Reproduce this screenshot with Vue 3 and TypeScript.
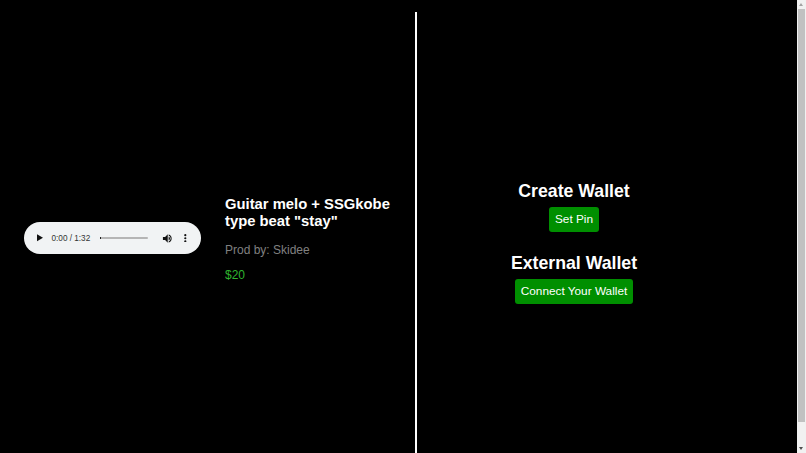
<script setup lang="ts">
const title = 'Guitar melo + SSGkobe type beat "stay"'
</script>

<template>
  <main class="page">
    <section class="left">
      <div class="player" role="group" aria-label="Audio player">
        <svg class="play" viewBox="0 0 10 12" width="6" height="7.500"><path d="M0 0 L10 6 L0 12 Z" fill="#111" /></svg>
        <span class="time">0:00 / 1:32</span>
        <span class="track"><span class="knob"></span></span>
        <svg class="vol" viewBox="0 0 24 24" width="11" height="11">
          <path fill="#111" d="M2 8.500v7h4.700l5.800 5.800V2.700L6.700 8.500z" />
          <path fill="#111" d="M14.500 7.500a5 5 0 0 1 0 9z" />
          <path fill="#111" d="M14.500 3.200v2.300a7 7 0 0 1 0 13v2.300a9.200 9.200 0 0 0 0-17.600z" />
        </svg>
        <svg class="more" viewBox="0 0 4 14" width="2.600" height="8.500">
          <circle cx="2" cy="2" r="1.800" fill="#111" />
          <circle cx="2" cy="7" r="1.800" fill="#111" />
          <circle cx="2" cy="12" r="1.800" fill="#111" />
        </svg>
      </div>
      <div class="info">
        <h3 class="title">{{ title }}</h3>
        <p class="prod">Prod by: Skidee</p>
        <p class="price">$20</p>
      </div>
    </section>
    <div class="divider"></div>
    <section class="right">
      <h2 class="heading">Create Wallet</h2>
      <button class="btn" type="button">Set Pin</button>
      <h2 class="heading second">External Wallet</h2>
      <button class="btn" type="button">Connect Your Wallet</button>
    </section>
    <div class="scrollbar" aria-hidden="true">
      <span class="arrow up"></span>
      <span class="thumb"></span>
      <span class="arrow down"></span>
    </div>
  </main>
</template>

<style>
html { background: #000; }
body { margin: 0; background: #000; }
</style>

<style scoped>
.page {
  position: relative;
  display: flex;
  box-sizing: border-box;
  height: 453px;
  overflow: hidden;
  padding-top: 12px;
  background: #000;
  font-family: "Liberation Sans", Arial, sans-serif;
  color: #fff;
}
.left {
  width: 415px;
  flex: none;
  display: flex;
  align-items: center;
  box-sizing: border-box;
  padding: 12px 0 0 24px;
}
.player {
  width: 177px;
  height: 32px;
  flex: none;
  display: flex;
  align-items: center;
  box-sizing: border-box;
  margin-top: -1px;
  padding-left: 13px;
  background: #f1f3f4;
  border-radius: 16px;
  font-size: 8.200px;
}
.play { flex: none; }
.time { margin-left: 8.500px; width: 39px; white-space: nowrap; color: #333; }
.track {
  position: relative;
  margin-left: 9px;
  width: 48px;
  height: 2px;
  background: #b5b5b5;
  border-radius: 1px;
}
.knob { position: absolute; left: 0; top: 0; width: 1px; height: 2px; background: #222; }
.vol { margin-left: 14px; flex: none; }
.more { margin-left: 11.500px; flex: none; }
.info { margin-left: 24px; width: 175px; }
.title { margin: 0; font-size: 14.800px; line-height: 17px; font-weight: 700; }
.prod { margin: 13px 0 0; font-size: 12px; line-height: 14px; color: #808080; }
.price { margin: 11px 0 0; font-size: 12px; line-height: 14px; color: #2fb52f; }
.divider { width: 2px; flex: none; background: #fff; }
.right {
  width: 314px;
  flex: none;
  display: flex;
  flex-direction: column;
  align-items: center;
  justify-content: center;
  box-sizing: border-box;
  padding-top: 18px;
}
.heading { margin: 0 0 5px; font-size: 17.700px; line-height: 22px; font-weight: 700; }
.second { margin-top: 20px; }
.btn {
  border: 0;
  border-radius: 3px;
  background: #008f00;
  color: #fff;
  font: 11.800px/25px "Liberation Sans", Arial, sans-serif;
  height: 25px;
  padding: 0 6px;
}
.scrollbar {
  position: absolute;
  top: 0;
  right: 0;
  bottom: 0;
  width: 9px;
  display: flex;
  flex-direction: column;
  background: #f1f1f1;
}
.arrow { height: 9px; flex: none; position: relative; }
.arrow::after {
  content: "";
  position: absolute;
  left: 2px;
  border-left: 2.500px solid transparent;
  border-right: 2.500px solid transparent;
}
.up::after { top: 3px; border-bottom: 3px solid #a3a3a3; }
.down { margin-top: auto; }
.down::after { top: 3px; border-top: 3px solid #505050; }
.thumb { height: 413px; margin: 0 1px; background: #c1c1c1; }
</style>
